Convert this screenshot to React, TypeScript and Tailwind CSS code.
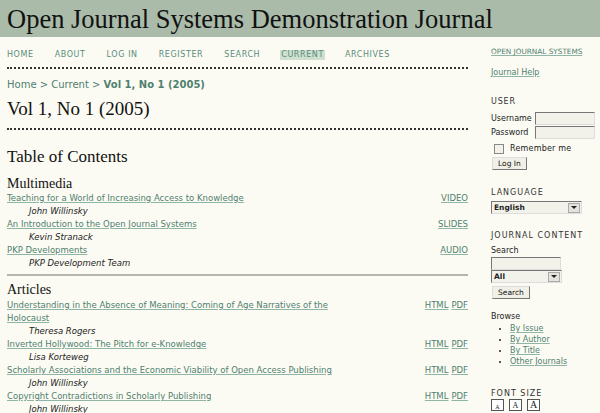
import React from "react";

const sans = { fontFamily: '"DejaVu Sans", Verdana, sans-serif' };
const serif = { fontFamily: '"Liberation Serif", Georgia, serif' };

const nav = ["HOME", "ABOUT", "LOG IN", "REGISTER", "SEARCH", "CURRENT", "ARCHIVES"];

type Item = { title: string[]; author: string; links: string[] };

const multimedia: Item[] = [
  { title: ["Teaching for a World of Increasing Access to Knowledge"], author: "John Willinsky", links: ["VIDEO"] },
  { title: ["An Introduction to the Open Journal Systems"], author: "Kevin Stranack", links: ["SLIDES"] },
  { title: ["PKP Developments"], author: "PKP Development Team", links: ["AUDIO"] },
];

const articles: Item[] = [
  {
    title: ["Understanding in the Absence of Meaning: Coming of Age Narratives of the", "Holocaust"],
    author: "Theresa Rogers",
    links: ["HTML", "PDF"],
  },
  { title: ["Inverted Hollywood: The Pitch for e-Knowledge"], author: "Lisa Korteweg", links: ["HTML", "PDF"] },
  {
    title: ["Scholarly Associations and the Economic Viability of Open Access Publishing"],
    author: "John Willinsky",
    links: ["HTML", "PDF"],
  },
  { title: ["Copyright Contradictions in Scholarly Publishing"], author: "John Willinsky", links: ["HTML", "PDF"] },
];

const link = "text-[#4f8070] underline decoration-[#8fb5a5]";

function TocItem({ item }: { item: Item }) {
  return (
    <div>
      <div className="flex justify-between">
        <div className="w-[380px]">
          {item.title.map((t) => (
            <div key={t} className="h-[13px] leading-[13px]">
              <a className={link}>{t}</a>
            </div>
          ))}
        </div>
        <div className="flex gap-[3px] h-[13px] leading-[13px]">
          {item.links.map((l) => (
            <a key={l} className={link}>
              {l}
            </a>
          ))}
        </div>
      </div>
      <div className="h-[13px] leading-[13px] pl-[22px] italic text-[#222]">{item.author}</div>
    </div>
  );
}

function Select({ label, w }: { label: string; w: string }) {
  return (
    <div className={`${w} h-[13px] flex items-center border border-[#777] border-r-[#ddd] border-b-[#ddd] bg-[#f3f2ea]`}>
      <span className="flex-1 pl-[2px] text-[7.5px] leading-none font-bold text-[#222]">{label}</span>
      <span className="w-[12px] h-[10px] mr-[1px] bg-[#e4e3dc] border border-[#aaa] flex items-center justify-center">
        <span className="block w-0 h-0 border-l-[3px] border-r-[3px] border-t-[3px] border-l-transparent border-r-transparent border-t-[#222]" />
      </span>
    </div>
  );
}

function Input({ w }: { w: string }) {
  return <div className={`${w} h-[13px] border border-[#777] border-r-[#ddd] border-b-[#ddd] bg-[#f3f2ea]`} />;
}

function Button({ label }: { label: string }) {
  return (
    <div className="inline-block px-[5px] h-[13px] leading-[11px] text-[7.5px] text-[#111] bg-[#f1f0e8] border border-[#ddd] border-r-[#777] border-b-[#777]">
      {label}
    </div>
  );
}

export default function App() {
  return (
    <div className="w-[600px] h-[413px] overflow-hidden bg-[#fbfbf3]" style={sans}>
      <div className="h-[37px] bg-[#aabba9] pl-[7px] pt-[4px]">
        <h1 className="text-[26.5px] leading-[30px] text-[#111]" style={serif}>
          Open Journal Systems Demonstration Journal
        </h1>
      </div>
      <div className="flex">
        <div className="w-[461px] ml-[7px] text-[8.5px]">
          <div className="flex gap-[21px] pt-[13px] h-[30px] text-[8px] tracking-[0.6px] text-[#5a8c7c]">
            {nav.map((n) => (
              <span key={n} className={n === "CURRENT" ? "bg-[#cfe0cf] h-[10px] leading-[10px] px-[1px] -mx-[1px]" : "h-[10px] leading-[10px]"}>
                {n}
              </span>
            ))}
          </div>
          <div className="border-t-2 border-dotted border-[#333] w-[461px]" />
          <div className="mt-[9px] text-[10px] leading-[13px] text-[#4f8070]">
            Home &gt; Current &gt; <span className="font-bold">Vol 1, No 1 (2005)</span>
          </div>
          <h2 className="mt-[5px] text-[19px] leading-[26px] text-[#111]" style={serif}>
            Vol 1, No 1 (2005)
          </h2>
          <div className="mt-[6px] border-t-2 border-dotted border-[#333]" />
          <h3 className="mt-[17px] text-[17px] leading-[20px] text-[#111]" style={serif}>
            Table of Contents
          </h3>
          <h4 className="mt-[8px] text-[14px] leading-[17px] text-[#111]" style={serif}>
            Multimedia
          </h4>
          <div>
            {multimedia.map((m) => (
              <TocItem key={m.title[0]} item={m} />
            ))}
          </div>
          <div className="mt-[4px] h-[2px] bg-[#b5b5ad]" />
          <h4 className="mt-[5px] text-[14px] leading-[17px] text-[#111]" style={serif}>
            Articles
          </h4>
          <div className="mt-[1px]">
            {articles.map((m) => (
              <TocItem key={m.title[0]} item={m} />
            ))}
          </div>
        </div>
        <div className="ml-[23px] w-[105px] text-[8px] leading-[11px] text-[#222]">
          <div className="mt-[9px] text-[7.3px]">
            <a className={link}>OPEN JOURNAL SYSTEMS</a>
          </div>
          <div className="mt-[10px]">
            <a className={link}>Journal Help</a>
          </div>
          <div className="mt-[18px] tracking-[0.8px] text-[#333]">USER</div>
          <div className="mt-[5px] flex items-center gap-[1px]">
            <span className="w-[43px]">Username</span>
            <Input w="w-[60px]" />
          </div>
          <div className="mt-[1px] flex items-center gap-[1px]">
            <span className="w-[43px]">Password</span>
            <Input w="w-[60px]" />
          </div>
          <div className="mt-[4px] flex items-center gap-[6px] pl-[3px]">
            <span className="w-[10px] h-[10px] border border-[#888] bg-[#f3f2ea]" />
            <span className="tracking-[0.2px]">Remember me</span>
          </div>
          <div className="mt-[3px] pl-[1px]">
            <Button label="Log In" />
          </div>
          <div className="mt-[17px] tracking-[1px] text-[#333]">LANGUAGE</div>
          <div className="mt-[3px]">
            <Select label="English" w="w-[91px]" />
          </div>
          <div className="mt-[16px] tracking-[1px] text-[#333]">JOURNAL CONTENT</div>
          <div className="mt-[4px]">Search</div>
          <div className="mt-[1px]">
            <Input w="w-[70px]" />
          </div>
          <div className="mt-[0px]">
            <Select label="All" w="w-[71px]" />
          </div>
          <div className="mt-[3px] pl-[1px]">
            <Button label="Search" />
          </div>
          <div className="mt-[12px]">Browse</div>
          <ul className="mt-[1px] pl-[19px] list-disc">
            {["By Issue", "By Author", "By Title", "Other Journals"].map((b) => (
              <li key={b} className="h-[11px] leading-[11px]">
                <a className={link}>{b}</a>
              </li>
            ))}
          </ul>
          <div className="mt-[21px] tracking-[1px] text-[#333]">FONT SIZE</div>
          <div className="flex gap-[5px]">
            {["text-[6px]", "text-[8px]", "text-[10px]"].map((s) => (
              <span
                key={s}
                className={`w-[13px] h-[12px] border border-[#555] bg-white flex items-end justify-center leading-none ${s}`}
                style={serif}
              >
                A
              </span>
            ))}
          </div>
        </div>
      </div>
    </div>
  );
}
